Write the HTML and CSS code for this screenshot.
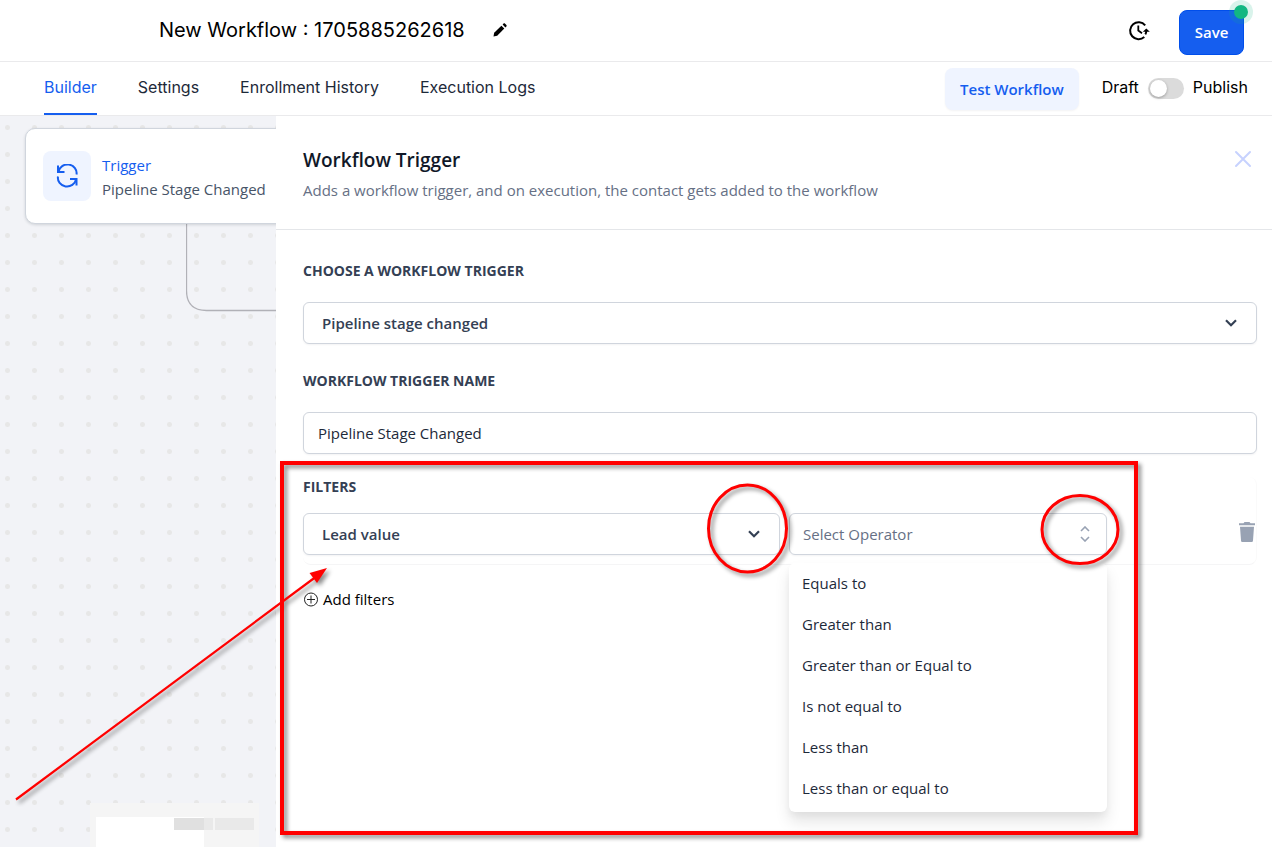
FILE: index.html
```html
<!DOCTYPE html>
<html lang="en">
<head>
<meta charset="utf-8">
<meta name="viewport" content="width=device-width, initial-scale=1">
<title>New Workflow</title>
<link rel="stylesheet" href="styles.css">
</head>
<body>
<div class="page">
  <header class="topbar">
    <div class="topbar-title">
      <h1 class="workflow-name">New Workflow : 1705885262618</h1>
      <button class="icon-button" type="button" aria-label="Rename workflow">
        <svg width="16" height="16" viewBox="0 0 16 16"><path d="M1.500 14.500l.7-3.700L9.400 3.700l2.900 2.900L5.200 13.800z" fill="#000"/><path d="M10.600 2.600l1-1c.4-.4.9-.4 1.300 0l1.500 1.500c.4.4.4.9 0 1.300l-1 1z" fill="#000"/></svg>
      </button>
    </div>
    <div class="topbar-actions">
      <button class="icon-button" type="button" aria-label="Version history">
        <svg width="22" height="22" viewBox="0 0 22 22" fill="none" stroke="#000" stroke-width="2"><path d="M17.200 5.300A8.500 8.500 0 1 0 16.300 17"/><path d="M10.300 5.500v5l3.700 2.700" stroke-width="1.800"/><path d="M14.800 11.800l3.500-3.300 3.500 3.300z" fill="#000" stroke="none"/><path d="M18.300 10.500q0 2.500-1 3.800"/></svg>
      </button>
      <button class="save-button" type="button">Save<span class="save-status"></span></button>
    </div>
  </header>

  <div class="navbar">
    <nav class="tabs">
      <a class="tab tab-active" href="#builder">Builder</a>
      <a class="tab" href="#settings">Settings</a>
      <a class="tab" href="#enrollment">Enrollment History</a>
      <a class="tab" href="#logs">Execution Logs</a>
    </nav>
    <div class="publish-area">
      <button class="test-button" type="button">Test Workflow</button>
      <label class="publish-toggle"><span class="publish-text">Draft</span><input class="switch" type="checkbox"><span class="publish-text">Publish</span></label>
    </div>
  </div>

  <main class="workspace">
    <section class="canvas" aria-label="Workflow canvas">
      <svg class="connector" width="120" height="90" viewBox="0 0 120 90" fill="none" stroke="#b1b1b7"><path d="M.5 0V66.500Q.500 86.500 20.500 86.500H120" stroke-width="1.300"/></svg>
      <div class="node">
        <span class="node-icon">
          <svg width="24" height="24" viewBox="0 0 24 24" fill="none" stroke="#155eef" stroke-width="2" stroke-linecap="square" stroke-linejoin="miter"><path d="M3 2.500v5.500h5.500"/><path d="M3.500 7.700A9 8.500 0 0 1 21.500 10.500" stroke-linecap="butt"/><path d="M21.500 20.500v-5.500h-5.500"/><path d="M21 15.300A9 8.500 0 0 1 3 12.500" stroke-linecap="butt"/></svg>
        </span>
        <div class="node-text">
          <div class="node-title">Trigger</div>
          <div class="node-name">Pipeline Stage Changed</div>
        </div>
      </div>
      <svg class="minimap" width="169" height="44" viewBox="0 0 169 44"><path fill="#f5f5f5" d="M0 0h169v44H0z"/><path fill="#fff" d="M6 14h108v30H6z"/><path fill="#e9e9e9" d="M84 15h39v12H84zM125 15h39v12h-39z"/><path fill="#e0e0e0" d="M84 15h30v12H84z"/></svg>
    </section>

    <section class="panel">
      <div class="panel-header">
        <div>
          <h2 class="panel-title">Workflow Trigger</h2>
          <p class="panel-subtitle">Adds a workflow trigger, and on execution, the contact gets added to the workflow</p>
        </div>
        <button class="icon-button" type="button" aria-label="Close">
          <svg width="18" height="18" viewBox="0 0 18 18" stroke="#c7d2fe" stroke-width="2" stroke-linecap="round"><path d="M2 2l14 14M16 2L2 16"/></svg>
        </button>
      </div>

      <form class="form">
        <div class="field">
          <label class="field-label" for="trigger">CHOOSE A WORKFLOW TRIGGER</label>
          <div class="select-box">
            <select class="control control-strong" id="trigger"><option>Pipeline stage changed</option></select>
            <svg class="select-icon" width="12" height="8" viewBox="0 0 12 8" fill="none" stroke="#344054" stroke-width="2.200"><path d="M1 1.200l5 5 5-5"/></svg>
          </div>
        </div>
        <div class="field">
          <label class="field-label" for="name">WORKFLOW TRIGGER NAME</label>
          <input class="control" id="name" type="text" value="Pipeline Stage Changed">
        </div>
        <div class="filters">
          <label class="field-label" for="filter">FILTERS</label>
          <div class="filter-row">
            <div class="select-box">
              <select class="control control-strong" id="filter"><option>Lead value</option></select>
              <svg class="select-icon" width="12" height="8" viewBox="0 0 12 8" fill="none" stroke="#344054" stroke-width="2.200"><path d="M1 1.200l5 5 5-5"/></svg>
            </div>
            <div class="select-box">
              <select class="control control-empty" id="operator" aria-label="Operator"><option>Select Operator</option></select>
              <svg class="select-icon" width="12" height="16" viewBox="0 0 12 16" fill="none" stroke="#98a2b3" stroke-width="1.600"><path d="M2 5l4-4 4 4M2 11l4 4 4-4"/></svg>
              <ul class="menu" role="listbox" aria-label="Operators">
                <li class="menu-item" role="option">Equals to</li>
                <li class="menu-item" role="option">Greater than</li>
                <li class="menu-item" role="option">Greater than or Equal to</li>
                <li class="menu-item" role="option">Is not equal to</li>
                <li class="menu-item" role="option">Less than</li>
                <li class="menu-item" role="option">Less than or equal to</li>
              </ul>
            </div>
            <button class="icon-button filter-delete" type="button" aria-label="Delete filter">
              <svg width="18" height="24" viewBox="0 0 18 24" fill="#98a2b3"><path d="M1 1.300h4.500L6.500 0h5l1 1.300H17v2H1zM2 4.800h14l-1 13.700c-.1 1-.7 1.500-1.500 1.500h-9C3.700 20 3.100 19.500 3 18.500z"/></svg>
            </button>
          </div>
        </div>
        <button class="add-filter" type="button">
          <svg width="16" height="16" viewBox="0 0 16 16" fill="none" stroke="#222"><circle cx="8" cy="8.500" r="6.500"/><path d="M8 4.500v8M4 8.500h8"/></svg>
          Add filters
        </button>
      </form>
    </section>
  </main>

  <svg class="markup" width="1272" height="847" viewBox="0 0 1272 847" fill="none" stroke="#f00" aria-hidden="true">
    <rect x="282" y="463" width="854" height="370" stroke-width="4"/>
    <ellipse cx="747.500" cy="528.500" rx="39" ry="43.500" stroke-width="3"/>
    <ellipse cx="1080" cy="529.500" rx="38" ry="34" stroke-width="3"/>
    <path d="M16 799.500L317 576" stroke-width="2.200"/>
    <path d="M327 568l-17.500 5 7.500 10z" fill="#f00" stroke="none"/>
  </svg>
</div>
</body>
</html>
```
FILE: styles.css
```css
* {
  box-sizing: border-box;
}

body {
  margin: 0;
  background: #fff;
  color: #101828;
  font-family: "Open Sans", "Noto Sans", sans-serif;
  font-size: 15px;
  line-height: 24px;
}

h1, h2, p, ul {
  margin: 0;
  padding: 0;
}

button, input, select {
  font: inherit;
  color: inherit;
}

.page {
  position: relative;
  display: flex;
  flex-direction: column;
  min-height: 100vh;
  overflow: hidden;
}

.icon-button {
  display: flex;
  padding: 0;
  border: 0;
  background: none;
}

.topbar {
  display: flex;
  align-items: center;
  justify-content: space-between;
  height: 62px;
  padding: 0 28px 0 159px;
  border-bottom: 1px solid #eaeaec;
}

.topbar-title {
  display: flex;
  align-items: center;
  gap: 27px;
  padding-bottom: 2px;
}

.workflow-name {
  color: #000;
  font-family: Inter, sans-serif;
  font-size: 20px;
  font-weight: 400;
}

.topbar-actions {
  display: flex;
  align-items: center;
  gap: 29px;
}

.save-button {
  position: relative;
  width: 65px;
  height: 45px;
  margin-top: 4px;
  padding: 0 0 2px;
  border: 1px solid #004eeb;
  border-radius: 8px;
  background: #155eef;
  color: #fff;
  font-weight: 600;
}

.save-status {
  position: absolute;
  top: -11px;
  right: -10px;
  width: 24px;
  height: 24px;
  border: 5px solid rgba(18, 183, 130, 0.16);
  border-radius: 50%;
  background: #12b782;
  background-clip: padding-box;
}

.navbar {
  display: flex;
  align-items: center;
  justify-content: space-between;
  height: 54px;
  padding: 0 24px 0 44px;
  border-bottom: 1px solid #eaeaec;
  font-family: Inter, sans-serif;
  font-size: 16px;
}

.tabs {
  display: flex;
  align-self: stretch;
  gap: 41px;
}

.tab {
  padding-top: 13px;
  color: #1d2939;
  text-decoration: none;
}

.tab-active {
  border-bottom: 2px solid #155eef;
  color: #155eef;
}

.publish-area {
  display: flex;
  align-items: center;
  gap: 23px;
}

.test-button {
  height: 42px;
  padding: 0 15px;
  border: 0;
  border-radius: 8px;
  background: #eff4ff;
  box-shadow: 0 1px 2px rgba(16, 24, 40, 0.05);
  color: #155eef;
  font-family: "Open Sans", "Noto Sans", sans-serif;
  font-size: 15px;
  font-weight: 600;
}

.publish-toggle {
  display: flex;
  align-items: center;
  gap: 9px;
  color: #000;
}

.publish-text {
  padding-bottom: 3px;
}

.switch {
  appearance: none;
  display: flex;
  align-items: center;
  width: 36px;
  height: 21px;
  margin: 0;
  padding: 0 2px;
  border-radius: 11px;
  background: #dbdbdb;
}

.switch::before {
  content: "";
  width: 17px;
  height: 17px;
  border-radius: 50%;
  background: #fff;
  box-shadow: 0 1px 3px rgba(0, 0, 0, 0.3);
}

.switch:checked {
  justify-content: flex-end;
  background: #155eef;
}

.workspace {
  display: flex;
  flex: 1;
}

.canvas {
  position: relative;
  flex: 0 0 276px;
  overflow: hidden;
  background-color: #f2f3f7;
  background-image: radial-gradient(circle, #e7e7e7 2px, transparent 3px);
  background-position: -6px -2px;
  background-size: 27px 27px;
}

.node {
  position: absolute;
  top: 12px;
  left: 25px;
  display: flex;
  align-items: center;
  gap: 11px;
  width: 325px;
  height: 96px;
  padding: 0 17px;
  border: 1px solid #d0d5dd;
  border-radius: 10px;
  background: #fff;
  box-shadow: 0 1px 3px rgba(16, 24, 40, 0.15);
}

.node-icon {
  display: flex;
  align-items: center;
  justify-content: center;
  width: 48px;
  height: 50px;
  border-radius: 8px;
  background: #eff4ff;
}

.node-text {
  padding-top: 2px;
  white-space: nowrap;
}

.node-title {
  color: #155eef;
  font-weight: 500;
}

.node-name {
  color: #475467;
}

.connector {
  position: absolute;
  top: 108px;
  left: 186px;
}

.minimap {
  position: absolute;
  bottom: 0;
  left: 90px;
}

.panel {
  flex: 1;
  min-width: 0;
}

.panel-header {
  display: flex;
  align-items: flex-start;
  justify-content: space-between;
  padding: 30px 20px 27px 27px;
  border-bottom: 1px solid #e4e6e9;
}

.panel-header .icon-button {
  margin-top: 4px;
}

.panel-title {
  font-size: 19px;
  font-weight: 600;
  line-height: 28px;
}

.panel-subtitle {
  margin-top: 4px;
  color: #667085;
}

.form {
  display: flex;
  flex-direction: column;
  padding: 31px 15px 24px 27px;
}

.field {
  display: flex;
  flex-direction: column;
  gap: 21px;
  margin-bottom: 27px;
}

.field-label {
  color: #344054;
  font-size: 14px;
  font-weight: 700;
  line-height: 20px;
}

.control {
  width: 100%;
  height: 42px;
  padding: 0 14px;
  border: 1px solid #d0d5dd;
  border-radius: 6px;
  background: #fff;
  box-shadow: 0 1px 2px rgba(16, 24, 40, 0.05);
  color: #1d2939;
  appearance: none;
}

.control-strong {
  padding-left: 18px;
  color: #344054;
  font-weight: 600;
}

.control-empty {
  padding-left: 13px;
  color: #667085;
}

.select-box {
  position: relative;
  display: grid;
  align-items: center;
}

.select-box > .control,
.select-icon {
  grid-area: 1 / 1;
}

.select-icon {
  z-index: 1;
  justify-self: end;
  margin-right: 20px;
  pointer-events: none;
}

.filters {
  display: flex;
  flex-direction: column;
  gap: 16px;
  margin-top: -4px;
  padding-bottom: 9px;
  border-bottom: 1px solid #f5f5f6;
  border-right: 1px solid #fafafa;
  border-radius: 8px;
}

.filter-row {
  display: grid;
  grid-template-columns: 3fr 2fr 140px;
  column-gap: 9px;
  align-items: center;
}

.filter-row .control-empty + .select-icon {
  margin-right: 16px;
}

.filter-delete {
  justify-self: end;
}

.menu {
  position: absolute;
  top: 50px;
  left: 0;
  z-index: 2;
  width: 100%;
  padding-bottom: 3px;
  border-radius: 6px;
  background: #fff;
  box-shadow: 0 10px 15px rgba(0, 0, 0, 0.1), 0 4px 6px rgba(0, 0, 0, 0.04);
  list-style: none;
}

.menu-item {
  padding: 8px 13px 9px;
  color: #1d2939;
}

.add-filter {
  display: flex;
  align-items: center;
  align-self: flex-start;
  gap: 4px;
  margin-top: 22px;
  padding: 0;
  border: 0;
  background: none;
  color: #000;
}

.markup {
  position: absolute;
  top: 0;
  left: 0;
  z-index: 3;
  pointer-events: none;
  filter: drop-shadow(3px 3px 2px rgba(0, 0, 0, 0.45));
}
```
